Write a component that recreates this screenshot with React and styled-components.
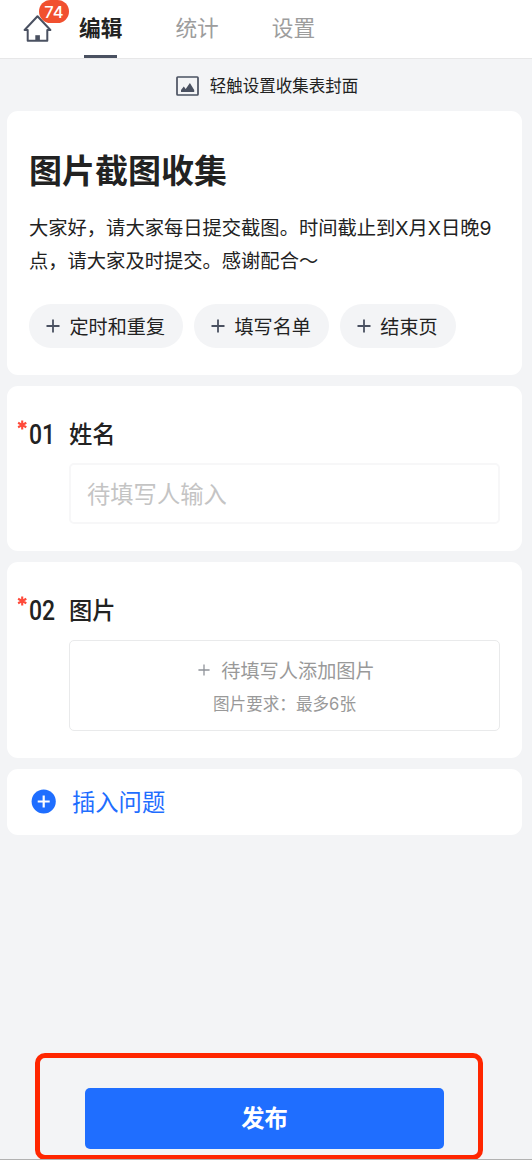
import React from 'react';
import styled, { createGlobalStyle } from 'styled-components';

const GlobalStyle = createGlobalStyle`
  * {
    box-sizing: border-box;
  }

  body {
    margin: 0;
    background: #f3f4f6;
    color: #222;
    font-family: Inter, "Noto Sans CJK SC", sans-serif;
  }

  button {
    border: 0;
    padding: 0;
    font-family: inherit;
    color: inherit;
    white-space: nowrap;
  }
`;

const Page = styled.div`
  display: flex;
  flex-direction: column;
  width: 532px;
  height: 1160px;
  overflow: hidden;
  border-bottom: 1px solid #b2b2b2;
`;

const Header = styled.header`
  display: flex;
  align-items: flex-start;
  flex: none;
  height: 58.5px;
  padding-left: 23px;
  background: #fff;
  border-bottom: 1px solid #e7e7e8;
`;

const Home = styled.div`
  position: relative;
  width: 29px;
  height: 28px;
  margin: 14px 27px 0 0;

  svg {
    display: block;
  }
`;

const Badge = styled.span`
  position: absolute;
  left: 16px;
  top: -14px;
  width: 30px;
  height: 23px;
  border-radius: 12px;
  background: #f1502f;
  color: #fff;
  font-size: 16.5px;
  font-weight: 500;
  line-height: 24px;
  text-align: center;
`;

const Tabs = styled.nav`
  display: flex;
  gap: 53px;
  height: 58px;
`;

const Tab = styled.div`
  display: flex;
  flex-direction: column;
  align-items: center;
  justify-content: space-between;
  width: 43.4px;
  font-size: 21.7px;
  line-height: 57px;
  font-weight: ${({ $active }) => ($active ? 700 : 400)};
  color: ${({ $active }) => ($active ? '#222' : '#9d9d9d')};

  &::after {
    content: '';
    width: 33px;
    height: 3px;
    margin-top: -3px;
    flex: none;
    background: ${({ $active }) => ($active ? '#4a5161' : 'transparent')};
  }
`;

const CoverButton = styled.div`
  display: flex;
  align-items: center;
  justify-content: center;
  flex: none;
  gap: 11px;
  height: 52.5px;
  padding: 3px 0 0 2px;
  font-size: 16.5px;
  line-height: 24px;
`;

const Cards = styled.main`
  display: flex;
  flex-direction: column;
  flex: 1;
  gap: 11px;
  padding: 0 10px 0 7px;
`;

const Card = styled.section`
  flex: none;
  height: ${({ $height }) => $height}px;
  padding: ${({ $padding }) => $padding};
  border-radius: 11px;
  background: #fff;
`;

const Title = styled.h1`
  margin: 0 0 17px;
  font-size: 33px;
  line-height: 48px;
  font-weight: 700;
`;

const Desc = styled.p`
  margin: 0;
  font-size: 19.3px;
  line-height: 33px;
  white-space: nowrap;
`;

const Chips = styled.div`
  display: flex;
  gap: 11px;
  margin-top: 26px;
`;

const Chip = styled.button`
  display: flex;
  align-items: center;
  gap: 9.5px;
  height: 44px;
  padding: 0 18px 1px 17px;
  border-radius: 22px;
  background: #f3f4f6;
  color: #222;
  font-size: 19.1px;

  svg {
    flex: none;
    margin-top: 1px;
  }
`;

const QuestionHead = styled.div`
  display: flex;
  align-items: center;
  height: 34px;
  font-size: 23.3px;
  line-height: 34px;
  font-weight: 500;
`;

const Required = styled.span`
  width: 12px;
  height: 34px;
  flex: none;

  svg {
    display: block;
    margin-top: 1.5px;
  }
`;

const Number = styled.span`
  width: 40px;
  flex: none;
  font-family: Roboto, sans-serif;
  font-size: 27px;
  font-weight: 500;
  transform: scaleX(0.85);
  transform-origin: left;
`;

const Field = styled.div`
  height: 61px;
  margin: 11px 0 0 52px;
  padding-left: 16px;
  border: 2px solid #f7f7f8;
  border-radius: 5px;
  color: #c4c4c4;
  font-size: 23.3px;
  line-height: 59px;
`;

const UploadBox = styled.div`
  display: flex;
  flex-direction: column;
  align-items: center;
  height: 91px;
  margin: 12px 0 0 52px;
  padding-top: 16px;
  border: 1.5px solid #e9eaeb;
  border-radius: 5px;
  color: #999;
`;

const UploadLabel = styled.div`
  display: flex;
  align-items: center;
  gap: 11px;
  padding-left: 4px;
  font-size: 19.2px;
  line-height: 28px;

  svg {
    margin-top: -2px;
  }
`;

const UploadHint = styled.div`
  margin-top: 7px;
  font-size: 16.6px;
  line-height: 24px;
`;

const InsertRow = styled.div`
  display: flex;
  align-items: center;
  gap: 16px;
  height: 65px;
  color: #1f6eff;
  font-size: 23.3px;
`;

const Highlight = styled.footer`
  flex: none;
  width: 448px;
  height: 107px;
  margin: 0 0 -1px 35.3px;
  padding: 30px 34px 0 45px;
  border: 5.5px solid #ff2600;
  border-radius: 10px;
`;

const PublishButton = styled.button`
  display: block;
  width: 358.4px;
  height: 60.5px;
  border-radius: 5px;
  background: #1f6eff;
  color: #fff;
  font-size: 23.3px;
  font-weight: 700;
  line-height: 61px;
`;

const Plus = ({ size = 14, color = '#4a5161', width = 1.8 }) => (
  <svg width={size} height={size} viewBox="0 0 14 14" fill="none" stroke={color} strokeWidth={width}>
    <path d="M7 0.5v13M0.5 7h13" />
  </svg>
);

const HomeIcon = () => (
  <svg width="29" height="28" viewBox="0 0 29 28" fill="none" stroke="#4a5161" strokeWidth="2">
    <path d="M4.7 16H1.6L14.5 2.2 27.4 16H24.3v10.7H4.7z" strokeLinejoin="round" />
    <path d="M12.3 27v-5.8h4.6v5.8z" fill="#4a5161" stroke="none" />
  </svg>
);

const ImageIcon = () => (
  <svg width="23" height="20" viewBox="0 0 23 20">
    <rect x="1" y="1" width="21" height="18" rx="0.8" fill="none" stroke="#4a5161" strokeWidth="1.7" />
    <path d="M5 16v-2l2.8-3.4 1.9 2.4 4.2-6 4.3 7V16z" fill="#4a5161" />
  </svg>
);

const Asterisk = () => (
  <svg width="10" height="10" viewBox="0 0 10 10" stroke="#ff4a3a" strokeWidth="2.1">
    <path d="M5.2 0.6v8.8M1.1 2.8l8.2 4.4M9.3 2.8L1.1 7.2" />
  </svg>
);

const PlusCircle = () => (
  <svg width="25" height="25" viewBox="0 0 25 25">
    <circle cx="12.7" cy="12.5" r="12.1" fill="#1f6eff" />
    <path d="M12.7 6.5v12M6.7 12.5h12" stroke="#fff" strokeWidth="2.2" />
  </svg>
);

const tabs = ['编辑', '统计', '设置'];
const options = ['定时和重复', '填写名单', '结束页'];

const Question = ({ number, title }) => (
  <QuestionHead>
    <Required>
      <Asterisk />
    </Required>
    <Number>{number}</Number>
    {title}
  </QuestionHead>
);

const App = () => {
  return (
    <>
      <GlobalStyle />
      <Page>
        <Header>
          <Home>
            <HomeIcon />
            <Badge>74</Badge>
          </Home>
          <Tabs>
            {tabs.map((tab, index) => (
              <Tab key={tab} $active={index === 0}>{tab}</Tab>
            ))}
          </Tabs>
        </Header>

        <CoverButton>
          <ImageIcon />
          轻触设置收集表封面
        </CoverButton>

        <Cards>
          <Card $height={264.4} $padding="36px 22px 0">
            <Title>图片截图收集</Title>
            <Desc>
              大家好，请大家每日提交截图。时间截止到X月X日晚9
              <br />
              点，请大家及时提交。感谢配合～
            </Desc>
            <Chips>
              {options.map((option) => (
                <Chip key={option}>
                  <Plus />
                  {option}
                </Chip>
              ))}
            </Chips>
          </Card>

          <Card $height={165} $padding="32px 22px 0 10px">
            <Question number="01" title="姓名" />
            <Field>待填写人输入</Field>
          </Card>

          <Card $height={195.5} $padding="32px 22px 0 10px">
            <Question number="02" title="图片" />
            <UploadBox>
              <UploadLabel>
                <Plus size={12} color="#8f9299" width={1.5} />
                待填写人添加图片
              </UploadLabel>
              <UploadHint>图片要求：最多6张</UploadHint>
            </UploadBox>
          </Card>

          <Card $height={66} $padding="0 24px">
            <InsertRow>
              <PlusCircle />
              插入问题
            </InsertRow>
          </Card>
        </Cards>

        <Highlight>
          <PublishButton>发布</PublishButton>
        </Highlight>
      </Page>
    </>
  );
};

export default App;
